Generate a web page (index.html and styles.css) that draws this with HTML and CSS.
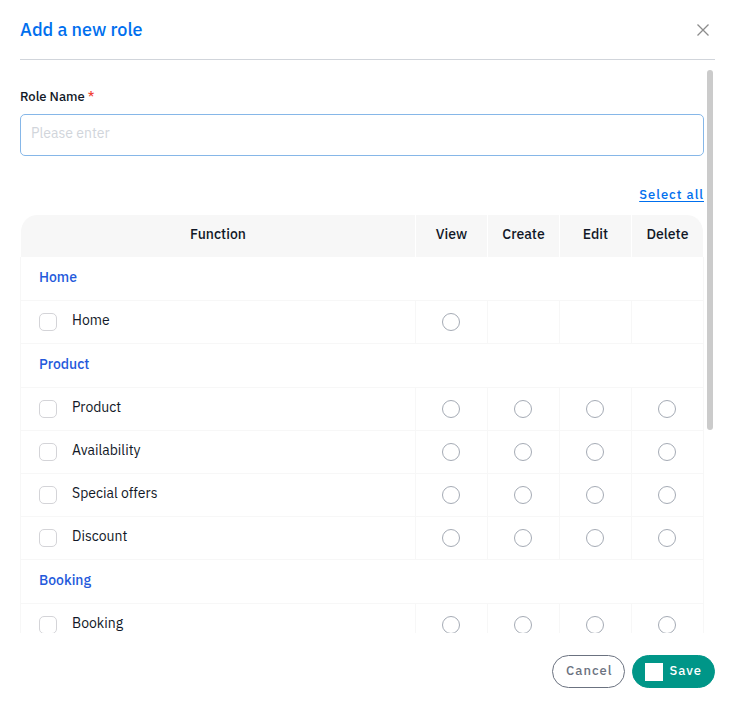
FILE: index.html
```
<!DOCTYPE html>
<html lang="en">
<head>
<meta charset="utf-8">
<meta name="viewport" content="width=device-width, initial-scale=1">
<title>Add a new role</title>
<link rel="stylesheet" href="styles.css">
</head>
<body>
<form class="dialog">
  <header class="dialog-header">
    <h1 class="dialog-title">Add a new role</h1>
    <button class="close" type="button" aria-label="Close">
      <svg viewBox="0 0 12 12" width="12" height="12" aria-hidden="true"><path d="M.5.5l11 11M11.5.5l-11 11"/></svg>
    </button>
  </header>
  <div class="dialog-body">
    <div class="scroller">
      <label class="field-label" for="role-name">Role Name <span class="required">*</span></label>
      <input class="text-input" id="role-name" type="text" placeholder="Please enter">
      <div class="select-row"><a class="select-all" href="#">Select all</a></div>
      <table class="permissions">
        <thead>
          <tr><th scope="col">Function</th><th class="action" scope="col">View</th><th class="action" scope="col">Create</th><th class="action" scope="col">Edit</th><th class="action" scope="col">Delete</th></tr>
        </thead>
        <tbody>
          <tr class="group"><th colspan="5">Home</th></tr>
          <tr>
            <td><label class="function"><input class="box" type="checkbox"><span>Home</span></label></td>
            <td><input class="dot" type="radio" aria-label="Home: view"></td><td></td><td></td><td></td>
          </tr>
          <tr class="group"><th colspan="5">Product</th></tr>
          <tr>
            <td><label class="function"><input class="box" type="checkbox"><span>Product</span></label></td>
            <td><input class="dot" type="radio" aria-label="Product: view"></td>
            <td><input class="dot" type="radio" aria-label="Product: create"></td>
            <td><input class="dot" type="radio" aria-label="Product: edit"></td>
            <td><input class="dot" type="radio" aria-label="Product: delete"></td>
          </tr>
          <tr>
            <td><label class="function"><input class="box" type="checkbox"><span>Availability</span></label></td>
            <td><input class="dot" type="radio" aria-label="Availability: view"></td>
            <td><input class="dot" type="radio" aria-label="Availability: create"></td>
            <td><input class="dot" type="radio" aria-label="Availability: edit"></td>
            <td><input class="dot" type="radio" aria-label="Availability: delete"></td>
          </tr>
          <tr>
            <td><label class="function"><input class="box" type="checkbox"><span>Special offers</span></label></td>
            <td><input class="dot" type="radio" aria-label="Special offers: view"></td>
            <td><input class="dot" type="radio" aria-label="Special offers: create"></td>
            <td><input class="dot" type="radio" aria-label="Special offers: edit"></td>
            <td><input class="dot" type="radio" aria-label="Special offers: delete"></td>
          </tr>
          <tr>
            <td><label class="function"><input class="box" type="checkbox"><span>Discount</span></label></td>
            <td><input class="dot" type="radio" aria-label="Discount: view"></td>
            <td><input class="dot" type="radio" aria-label="Discount: create"></td>
            <td><input class="dot" type="radio" aria-label="Discount: edit"></td>
            <td><input class="dot" type="radio" aria-label="Discount: delete"></td>
          </tr>
          <tr class="group"><th colspan="5">Booking</th></tr>
          <tr>
            <td><label class="function"><input class="box" type="checkbox"><span>Booking</span></label></td>
            <td><input class="dot" type="radio" aria-label="Booking: view"></td>
            <td><input class="dot" type="radio" aria-label="Booking: create"></td>
            <td><input class="dot" type="radio" aria-label="Booking: edit"></td>
            <td><input class="dot" type="radio" aria-label="Booking: delete"></td>
          </tr>
        </tbody>
      </table>
    </div>
    <div class="track" aria-hidden="true"><div class="thumb"></div></div>
  </div>
  <footer class="dialog-footer">
    <button class="button cancel" type="button">Cancel</button>
    <button class="button save" type="submit"><span class="save-icon"></span><span class="save-text">Save</span></button>
  </footer>
</form>
</body>
</html>
```
FILE: styles.css
```
* { box-sizing: border-box; }

body {
  margin: 0;
  background: #fff;
  color: #111827;
  font-family: "IBM Plex Sans", Roboto, "Liberation Sans", sans-serif;
  font-size: 14px;
  line-height: 22px;
}

input, button { font: inherit; }

.dialog {
  display: flex;
  flex-direction: column;
  height: 100vh;
  padding: 0 19px 17px 20px;
}

.dialog-header {
  display: flex;
  align-items: center;
  justify-content: space-between;
  height: 60px;
  flex: none;
  padding-right: 6px;
  border-bottom: 1px solid #d1d5db;
}

.dialog-title {
  margin: 0;
  color: #006fee;
  font-size: 18px;
  font-weight: 500;
  line-height: 28px;
}

.close {
  display: flex;
  padding: 0;
  border: 0;
  background: none;
}

.close svg {
  fill: none;
  stroke: #8c8c8c;
  stroke-width: 1.3;
}

.dialog-body {
  display: flex;
  flex: 1;
  gap: 3px;
  min-height: 0;
  padding: 10px 2px 0 0;
}

.scroller {
  flex: 1;
  overflow-y: auto;
  scrollbar-width: none;
  padding-top: 16px;
}

.track { width: 6px; }

.thumb {
  height: 64%;
  border-radius: 3px;
  background: #cbcbcb;
}

.field-label {
  display: block;
  margin-bottom: 6px;
  font-size: 13px;
  font-weight: 500;
}

.required { color: #f04438; }

.text-input {
  display: block;
  width: 100%;
  height: 42px;
  padding: 0 10px 4px;
  border: 1px solid #86b7e8;
  border-radius: 5px;
  outline: 0;
}

.text-input::placeholder { color: #d1d5db; }

.select-row {
  display: flex;
  justify-content: flex-end;
  padding: 28px 0 9px;
}

.select-all {
  color: #006fee;
  font-size: 13px;
  font-weight: 500;
  letter-spacing: 1px;
  text-underline-offset: 2px;
}

.permissions {
  width: 100%;
  table-layout: fixed;
  border-spacing: 0;
}

.permissions th, .permissions td { padding: 0; }

.permissions thead th {
  height: 42px;
  padding-bottom: 4px;
  border-left: 1px solid #fff;
  background: #f7f7f7;
  font-weight: 500;
}

.permissions .action { width: 72px; }

.permissions thead th:first-child { border-radius: 17px 0 0; }

.permissions thead th:last-child {
  width: 73px;
  border-right: 1px solid #fff;
  border-radius: 0 17px 0 0;
}

.permissions tbody th, .permissions tbody td {
  height: 43px;
  border-bottom: 1px solid #f7f7f7;
  border-left: 1px solid #f7f7f7;
}

.permissions tbody td + td { padding-right: 1px; }

.permissions tbody tr > :last-child { border-right: 1px solid #f7f7f7; }

.permissions .group th {
  height: 44px;
  padding: 0 18px 3px;
  color: #2459db;
  font-weight: 500;
  text-align: left;
}

.function {
  display: flex;
  align-items: center;
  gap: 15px;
  padding-left: 18px;
}

.function span { padding-bottom: 4px; }

.box, .dot {
  appearance: none;
  width: 18px;
  height: 18px;
  margin: 0;
  border: 1px solid #d4d4d8;
  border-radius: 5px;
  background: #fff;
}

.box:checked { background: #2459db; }

.dot {
  display: block;
  margin: 0 auto;
  border-color: #a5abb5;
  border-radius: 50%;
}

.dot:checked { border: 5px solid #2459db; }

.dialog-footer {
  display: flex;
  flex: none;
  justify-content: flex-end;
  gap: 7px;
  padding-top: 22px;
}

.button {
  display: flex;
  align-items: center;
  height: 33px;
  padding: 0 12px 1px;
  border: 1px solid #6b7280;
  border-radius: 17px;
  background: #fff;
  color: #6b7280;
  font-size: 13px;
  font-weight: 500;
  letter-spacing: 1px;
}

.cancel { padding-left: 13px; }

.save {
  gap: 6px;
  padding-bottom: 0;
  border-color: #009688;
  background: #009688;
  color: #fff;
}

.save-icon {
  width: 18px;
  height: 18px;
  background: #fff;
}

.save-text { padding-bottom: 2px; }
```
